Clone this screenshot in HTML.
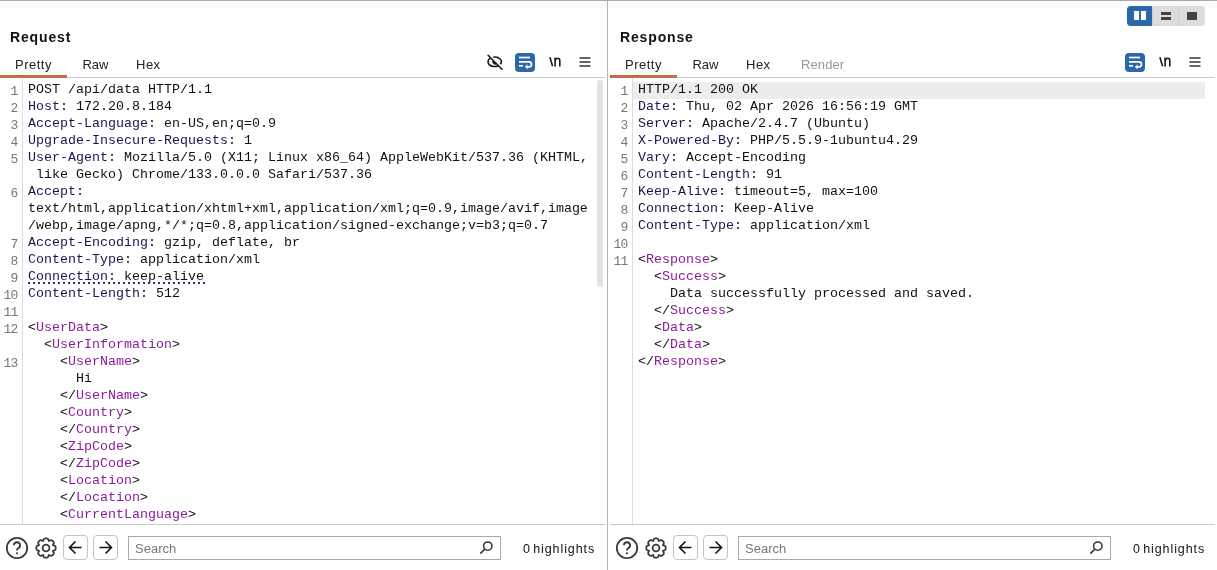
<!DOCTYPE html>
<html><head><meta charset="utf-8"><style>
*{margin:0;padding:0;box-sizing:border-box}
html,body{width:1217px;height:570px;overflow:hidden;background:#fff;position:relative;font-family:"Liberation Sans",sans-serif}
div,svg{position:absolute}
.topline{left:0;top:0;width:1217px;height:1px;background:#a9a9a9}
.toptint{left:0;top:1px;width:1217px;height:7px;background:#fcfbfb}
.divider{left:607px;top:1px;width:1px;height:569px;background:#b4b4b4}
.title{top:28px;font-weight:bold;font-size:14px;line-height:18px;color:#111;white-space:pre;letter-spacing:0.85px}
.tab{top:56px;font-size:13px;line-height:18px;color:#222;white-space:pre;letter-spacing:0.5px}
.tab.dis{color:#999}
.uline{top:75px;width:67px;height:2.5px;background:#c4694a}
.hline{height:1px;background:#c9c9c9}
.gutter{top:78px;width:1px;height:446px;background:#dcdcdc}
.ln{left:0;width:17.6px;text-align:right;font-family:"Liberation Mono",monospace;font-size:13px;letter-spacing:-0.8px;line-height:17px;height:17px;color:#777;white-space:pre;margin-top:1px}
.cl{font-family:"Liberation Mono",monospace;font-size:13.333px;line-height:17px;height:17px;color:#111;white-space:pre;margin-top:-1px}
.hn{color:#191650}
.tn{color:#8a1d9c}
.prop{font-family:"Liberation Sans",sans-serif;font-size:13px}
.dotl{left:28px;top:282px;width:178px;height:2px;background-image:linear-gradient(to right,#2a2a72 2px,transparent 2px);background-size:5px 2px;background-repeat:repeat-x}
.lhl{left:633px;top:82px;width:572px;height:17px;background:#ededee}
.wrapbtn{top:53px;width:20px;height:19px;border-radius:4px;background:#2c67a7}
.wrapbtn svg{left:0;top:0}
.nl{top:54px;font-size:14px;line-height:17px;color:#222;font-family:"Liberation Sans",sans-serif}
.navbtn{top:535px;width:25px;height:25px;border:1px solid #c4c4c4;border-radius:4px}
.navbtn svg{left:-1px;top:-1px}
.search{top:536px;width:373px;height:24px;border:1px solid #a9a9a9;background:#fff}
.search span{position:absolute;left:6px;top:3px;font-size:13px;line-height:17px;color:#777}
.hl{top:541px;font-size:12.5px;line-height:17px;color:#111;white-space:pre;letter-spacing:0.9px;word-spacing:-2px}
.scroll{left:597px;top:80px;width:6px;height:207px;border-radius:3px;background:#e3e3e3}
.layout{left:1127px;top:6px;width:78px;height:20px;border-radius:4px;background:#dcdcdc;overflow:hidden}
</style></head>
<body><div id="root" style="left:0;top:0;width:1217px;height:570px;will-change:transform;background:#fff">
<div class="topline"></div><div class="toptint"></div>
<div class="divider"></div>
<div class="layout"><div style="left:0;top:0;width:25px;height:20px;background:#2c67a7"></div>
<div style="left:7px;top:5px;width:5px;height:9px;background:#fff"></div><div style="left:14px;top:5px;width:5px;height:9px;background:#fff"></div>
<div style="left:25px;top:0;width:1px;height:20px;background:#d0d0d0"></div>
<div style="left:34px;top:5.5px;width:10px;height:3px;background:#444"></div><div style="left:34px;top:11px;width:10px;height:3px;background:#444"></div>
<div style="left:51px;top:0;width:1px;height:20px;background:#d0d0d0"></div>
<div style="left:60px;top:5.5px;width:10px;height:8px;background:#444"></div>
</div>
<div class="title" style="left:10px">Request</div>
<div class="tab" style="left:15px">Pretty</div>
<div class="tab" style="left:82.5px;letter-spacing:-0.1px">Raw</div>
<div class="tab" style="left:136px">Hex</div>
<div class="uline" style="left:0px"></div>
<div class="hline" style="left:67px;top:77px;width:538px"></div>
<svg class="ic" style="left:484px;top:52px" width="22" height="21" viewBox="0 0 22 21"><g fill="none" stroke="#1a1a1a" stroke-width="1.6"><path d="M6.79 6.01 A6.6 4.7 0 0 0 14.41 13.69"/><path d="M9.22 5.22 A6.6 4.7 0 0 1 16.36 12.22"/><path d="M4.1 3.3 L18 17.3" stroke-linecap="round"/></g><path d="M9.4 8.6 A2.1 2.1 0 0 0 12.4 11.6Z" fill="#1a1a1a" stroke="#1a1a1a" stroke-width="1"/></svg><div class="wrapbtn" style="left:515px"><svg width="20" height="19" viewBox="0 0 20 19"><path d="M4 4.5H15" stroke="#fff" stroke-width="1.7"/><path d="M4 8.8H14a2.5 2.5 0 0 1 0 5H12" fill="none" stroke="#fff" stroke-width="1.7"/><path d="M9.8 13.8 L12.6 11.4 L12.6 16.2Z" fill="#fff"/><path d="M4 12.8H8" stroke="#fff" stroke-width="1.7"/></svg></div>
<svg class="ic" style="left:544px;top:52px" width="22" height="20" viewBox="0 0 22 20"><g fill="none" stroke="#1a1a1a" stroke-width="1.6"><path d="M5.9 5.2 L8.6 14.3"/><path d="M11.1 14.4 V5.6"/><path d="M11.1 8.4 Q11.9 6.3 13.7 6.3 Q15.8 6.3 15.8 8.8 V14.4"/></g></svg>
<svg class="ic" style="left:579px;top:56px" width="12" height="12" viewBox="0 0 12 12"><path d="M0.5 2H11.5M0.5 6H11.5M0.5 10H11.5" stroke="#333" stroke-width="1.6"/></svg>
<div class="gutter" style="left:22px"></div>
<div class="ln" style="top:82px">1</div>
<div class="cl" style="left:28px;top:82px">POST /api/data HTTP/1.1</div>
<div class="ln" style="top:99px">2</div>
<div class="cl" style="left:28px;top:99px"><span class="hn">Host</span>: 172.20.8.184</div>
<div class="ln" style="top:116px">3</div>
<div class="cl" style="left:28px;top:116px"><span class="hn">Accept-Language</span>: en-US,en;q=0.9</div>
<div class="ln" style="top:133px">4</div>
<div class="cl" style="left:28px;top:133px"><span class="hn">Upgrade-Insecure-Requests</span>: 1</div>
<div class="ln" style="top:150px">5</div>
<div class="cl" style="left:28px;top:150px"><span class="hn">User-Agent</span>: Mozilla/5.0 (X11; Linux x86_64) AppleWebKit/537.36 (KHTML,</div>
<div class="cl" style="left:28px;top:167px"> like Gecko) Chrome/133.0.0.0 Safari/537.36</div>
<div class="ln" style="top:184px">6</div>
<div class="cl" style="left:28px;top:184px"><span class="hn">Accept</span>:</div>
<div class="cl" style="left:28px;top:201px">text/html,application/xhtml+xml,application/xml;q=0.9,image/avif,image</div>
<div class="cl" style="left:28px;top:218px">/webp,image/apng,*/*;q=0.8,application/signed-exchange;v=b3;q=0.7</div>
<div class="ln" style="top:235px">7</div>
<div class="cl" style="left:28px;top:235px"><span class="hn">Accept-Encoding</span>: gzip, deflate, br</div>
<div class="ln" style="top:252px">8</div>
<div class="cl" style="left:28px;top:252px"><span class="hn">Content-Type</span>: application/xml</div>
<div class="ln" style="top:269px">9</div>
<div class="cl" style="left:28px;top:269px"><span class="hn">Connection</span>: keep-alive</div>
<div class="ln" style="top:286px">10</div>
<div class="cl" style="left:28px;top:286px"><span class="hn">Content-Length</span>: 512</div>
<div class="ln" style="top:303px">11</div>
<div class="cl" style="left:28px;top:303px"></div>
<div class="ln" style="top:320px">12</div>
<div class="cl" style="left:28px;top:320px">&lt;<span class="tn">UserData</span>&gt;</div>
<div class="cl" style="left:28px;top:337px">  &lt;<span class="tn">UserInformation</span>&gt;</div>
<div class="ln" style="top:354px">13</div>
<div class="cl" style="left:28px;top:354px">    &lt;<span class="tn">UserName</span>&gt;</div>
<div class="cl" style="left:28px;top:371px">      Hi</div>
<div class="cl" style="left:28px;top:388px">    &lt;/<span class="tn">UserName</span>&gt;</div>
<div class="cl" style="left:28px;top:405px">    &lt;<span class="tn">Country</span>&gt;</div>
<div class="cl" style="left:28px;top:422px">    &lt;/<span class="tn">Country</span>&gt;</div>
<div class="cl" style="left:28px;top:439px">    &lt;<span class="tn">ZipCode</span>&gt;</div>
<div class="cl" style="left:28px;top:456px">    &lt;/<span class="tn">ZipCode</span>&gt;</div>
<div class="cl" style="left:28px;top:473px">    &lt;<span class="tn">Location</span>&gt;</div>
<div class="cl" style="left:28px;top:490px">    &lt;/<span class="tn">Location</span>&gt;</div>
<div class="cl" style="left:28px;top:507px">    &lt;<span class="tn">CurrentLanguage</span>&gt;</div>
<div class="scroll"></div><div class="dotl"></div>
<div class="hline" style="left:0px;top:524px;width:605px"></div>
<svg class="ic" style="left:5px;top:536px" width="24" height="24" viewBox="0 0 24 24"><circle cx="12" cy="12" r="10.2" fill="none" stroke="#3a3a3a" stroke-width="1.8"/><path d="M8.9 9.3a3.1 3.1 0 1 1 4.3 2.9c-.8.4-1.2.9-1.2 1.8v.6" fill="none" stroke="#3a3a3a" stroke-width="1.8"/><circle cx="12" cy="17.3" r="1.1" fill="#3a3a3a"/></svg>
<svg class="ic" style="left:34px;top:536px" width="24" height="24" viewBox="0 0 24 24"><path d="M9.17 5.16 Q9.23 5.14 9.55 3.88 L9.62 3.58 Q9.94 2.32 11.24 2.32 L12.76 2.32 Q14.06 2.32 14.38 3.58 L14.45 3.88 Q14.77 5.14 14.83 5.16 L14.83 5.16 Q14.89 5.19 16.01 4.52 L16.28 4.36 Q17.39 3.70 18.31 4.62 L19.38 5.69 Q20.30 6.61 19.64 7.72 L19.48 7.99 Q18.81 9.11 18.84 9.17 L18.84 9.17 Q18.86 9.23 20.12 9.55 L20.42 9.62 Q21.68 9.94 21.68 11.24 L21.68 12.76 Q21.68 14.06 20.42 14.38 L20.12 14.45 Q18.86 14.77 18.84 14.83 L18.84 14.83 Q18.81 14.89 19.48 16.01 L19.64 16.28 Q20.30 17.39 19.38 18.31 L18.31 19.38 Q17.39 20.30 16.28 19.64 L16.01 19.48 Q14.89 18.81 14.83 18.84 L14.83 18.84 Q14.77 18.86 14.45 20.12 L14.38 20.42 Q14.06 21.68 12.76 21.68 L11.24 21.68 Q9.94 21.68 9.62 20.42 L9.55 20.12 Q9.23 18.86 9.17 18.84 L9.17 18.84 Q9.11 18.81 7.99 19.48 L7.72 19.64 Q6.61 20.30 5.69 19.38 L4.62 18.31 Q3.70 17.39 4.36 16.28 L4.52 16.01 Q5.19 14.89 5.16 14.83 L5.16 14.83 Q5.14 14.77 3.88 14.45 L3.58 14.38 Q2.32 14.06 2.32 12.76 L2.32 11.24 Q2.32 9.94 3.58 9.62 L3.88 9.55 Q5.14 9.23 5.16 9.17 L5.16 9.17 Q5.19 9.11 4.52 7.99 L4.36 7.72 Q3.70 6.61 4.62 5.69 L5.69 4.62 Q6.61 3.70 7.72 4.36 L7.99 4.52 Q9.11 5.19 9.17 5.16Z" fill="none" stroke="#3a3a3a" stroke-width="1.8" stroke-linejoin="round"/><circle cx="12" cy="12" r="3.4" fill="none" stroke="#3a3a3a" stroke-width="1.8"/></svg>
<div class="navbtn" style="left:63px"><svg width="25" height="25" viewBox="0 0 25 25"><path d="M18.5 12.5H7M12.5 6.5L6.5 12.5L12.5 18.5" fill="none" stroke="#111" stroke-width="1.6"/></svg></div>
<div class="navbtn" style="left:93px"><svg width="25" height="25" viewBox="0 0 25 25"><path d="M6.5 12.5H18M12.5 6.5L18.5 12.5L12.5 18.5" fill="none" stroke="#111" stroke-width="1.6"/></svg></div>
<div class="search" style="left:128px"><span>Search</span></div>
<svg class="ic" style="left:478px;top:540px" width="16" height="16" viewBox="0 0 16 16"><circle cx="9.8" cy="6.1" r="4.2" fill="none" stroke="#333" stroke-width="1.5"/><path d="M6.8 9.1L2.3 13.6" stroke="#333" stroke-width="1.5"/></svg>
<div class="hl" style="left:523px">0 highlights</div>
<div class="title" style="left:620px">Response</div>
<div class="tab" style="left:625px">Pretty</div>
<div class="tab" style="left:692.5px;letter-spacing:-0.1px">Raw</div>
<div class="tab" style="left:746px">Hex</div>
<div class="tab dis" style="left:801px;letter-spacing:0.1px">Render</div>
<div class="uline" style="left:610px"></div>
<div class="hline" style="left:677px;top:77px;width:538px"></div>
<div class="wrapbtn" style="left:1125px"><svg width="20" height="19" viewBox="0 0 20 19"><path d="M4 4.5H15" stroke="#fff" stroke-width="1.7"/><path d="M4 8.8H14a2.5 2.5 0 0 1 0 5H12" fill="none" stroke="#fff" stroke-width="1.7"/><path d="M9.8 13.8 L12.6 11.4 L12.6 16.2Z" fill="#fff"/><path d="M4 12.8H8" stroke="#fff" stroke-width="1.7"/></svg></div>
<svg class="ic" style="left:1154px;top:52px" width="22" height="20" viewBox="0 0 22 20"><g fill="none" stroke="#1a1a1a" stroke-width="1.6"><path d="M5.9 5.2 L8.6 14.3"/><path d="M11.1 14.4 V5.6"/><path d="M11.1 8.4 Q11.9 6.3 13.7 6.3 Q15.8 6.3 15.8 8.8 V14.4"/></g></svg>
<svg class="ic" style="left:1189px;top:56px" width="12" height="12" viewBox="0 0 12 12"><path d="M0.5 2H11.5M0.5 6H11.5M0.5 10H11.5" stroke="#333" stroke-width="1.6"/></svg>
<div class="lhl"></div>
<div class="gutter" style="left:632px"></div>
<div class="ln" style="left:610px;top:82px">1</div>
<div class="cl" style="left:638px;top:82px">HTTP/1.1 200 OK</div>
<div class="ln" style="left:610px;top:99px">2</div>
<div class="cl" style="left:638px;top:99px"><span class="hn">Date</span>: Thu, 02 Apr 2026 16:56:19 GMT</div>
<div class="ln" style="left:610px;top:116px">3</div>
<div class="cl" style="left:638px;top:116px"><span class="hn">Server</span>: Apache/2.4.7 (Ubuntu)</div>
<div class="ln" style="left:610px;top:133px">4</div>
<div class="cl" style="left:638px;top:133px"><span class="hn">X-Powered-By</span>: PHP/5.5.9-1ubuntu4.29</div>
<div class="ln" style="left:610px;top:150px">5</div>
<div class="cl" style="left:638px;top:150px"><span class="hn">Vary</span>: Accept-Encoding</div>
<div class="ln" style="left:610px;top:167px">6</div>
<div class="cl" style="left:638px;top:167px"><span class="hn">Content-Length</span>: 91</div>
<div class="ln" style="left:610px;top:184px">7</div>
<div class="cl" style="left:638px;top:184px"><span class="hn">Keep-Alive</span>: timeout=5, max=100</div>
<div class="ln" style="left:610px;top:201px">8</div>
<div class="cl" style="left:638px;top:201px"><span class="hn">Connection</span>: Keep-Alive</div>
<div class="ln" style="left:610px;top:218px">9</div>
<div class="cl" style="left:638px;top:218px"><span class="hn">Content-Type</span>: application/xml</div>
<div class="ln" style="left:610px;top:235px">10</div>
<div class="cl" style="left:638px;top:235px"></div>
<div class="ln" style="left:610px;top:252px">11</div>
<div class="cl" style="left:638px;top:252px">&lt;<span class="tn">Response</span>&gt;</div>
<div class="cl" style="left:638px;top:269px">  &lt;<span class="tn">Success</span>&gt;</div>
<div class="cl" style="left:638px;top:286px">    Data successfully processed and saved.</div>
<div class="cl" style="left:638px;top:303px">  &lt;/<span class="tn">Success</span>&gt;</div>
<div class="cl" style="left:638px;top:320px">  &lt;<span class="tn">Data</span>&gt;</div>
<div class="cl" style="left:638px;top:337px">  &lt;/<span class="tn">Data</span>&gt;</div>
<div class="cl" style="left:638px;top:354px">&lt;/<span class="tn">Response</span>&gt;</div>
<div class="hline" style="left:610px;top:524px;width:605px"></div>
<svg class="ic" style="left:615px;top:536px" width="24" height="24" viewBox="0 0 24 24"><circle cx="12" cy="12" r="10.2" fill="none" stroke="#3a3a3a" stroke-width="1.8"/><path d="M8.9 9.3a3.1 3.1 0 1 1 4.3 2.9c-.8.4-1.2.9-1.2 1.8v.6" fill="none" stroke="#3a3a3a" stroke-width="1.8"/><circle cx="12" cy="17.3" r="1.1" fill="#3a3a3a"/></svg>
<svg class="ic" style="left:644px;top:536px" width="24" height="24" viewBox="0 0 24 24"><path d="M9.17 5.16 Q9.23 5.14 9.55 3.88 L9.62 3.58 Q9.94 2.32 11.24 2.32 L12.76 2.32 Q14.06 2.32 14.38 3.58 L14.45 3.88 Q14.77 5.14 14.83 5.16 L14.83 5.16 Q14.89 5.19 16.01 4.52 L16.28 4.36 Q17.39 3.70 18.31 4.62 L19.38 5.69 Q20.30 6.61 19.64 7.72 L19.48 7.99 Q18.81 9.11 18.84 9.17 L18.84 9.17 Q18.86 9.23 20.12 9.55 L20.42 9.62 Q21.68 9.94 21.68 11.24 L21.68 12.76 Q21.68 14.06 20.42 14.38 L20.12 14.45 Q18.86 14.77 18.84 14.83 L18.84 14.83 Q18.81 14.89 19.48 16.01 L19.64 16.28 Q20.30 17.39 19.38 18.31 L18.31 19.38 Q17.39 20.30 16.28 19.64 L16.01 19.48 Q14.89 18.81 14.83 18.84 L14.83 18.84 Q14.77 18.86 14.45 20.12 L14.38 20.42 Q14.06 21.68 12.76 21.68 L11.24 21.68 Q9.94 21.68 9.62 20.42 L9.55 20.12 Q9.23 18.86 9.17 18.84 L9.17 18.84 Q9.11 18.81 7.99 19.48 L7.72 19.64 Q6.61 20.30 5.69 19.38 L4.62 18.31 Q3.70 17.39 4.36 16.28 L4.52 16.01 Q5.19 14.89 5.16 14.83 L5.16 14.83 Q5.14 14.77 3.88 14.45 L3.58 14.38 Q2.32 14.06 2.32 12.76 L2.32 11.24 Q2.32 9.94 3.58 9.62 L3.88 9.55 Q5.14 9.23 5.16 9.17 L5.16 9.17 Q5.19 9.11 4.52 7.99 L4.36 7.72 Q3.70 6.61 4.62 5.69 L5.69 4.62 Q6.61 3.70 7.72 4.36 L7.99 4.52 Q9.11 5.19 9.17 5.16Z" fill="none" stroke="#3a3a3a" stroke-width="1.8" stroke-linejoin="round"/><circle cx="12" cy="12" r="3.4" fill="none" stroke="#3a3a3a" stroke-width="1.8"/></svg>
<div class="navbtn" style="left:673px"><svg width="25" height="25" viewBox="0 0 25 25"><path d="M18.5 12.5H7M12.5 6.5L6.5 12.5L12.5 18.5" fill="none" stroke="#111" stroke-width="1.6"/></svg></div>
<div class="navbtn" style="left:703px"><svg width="25" height="25" viewBox="0 0 25 25"><path d="M6.5 12.5H18M12.5 6.5L18.5 12.5L12.5 18.5" fill="none" stroke="#111" stroke-width="1.6"/></svg></div>
<div class="search" style="left:738px"><span>Search</span></div>
<svg class="ic" style="left:1088px;top:540px" width="16" height="16" viewBox="0 0 16 16"><circle cx="9.8" cy="6.1" r="4.2" fill="none" stroke="#333" stroke-width="1.5"/><path d="M6.8 9.1L2.3 13.6" stroke="#333" stroke-width="1.5"/></svg>
<div class="hl" style="left:1133px">0 highlights</div>

</div></body></html>
